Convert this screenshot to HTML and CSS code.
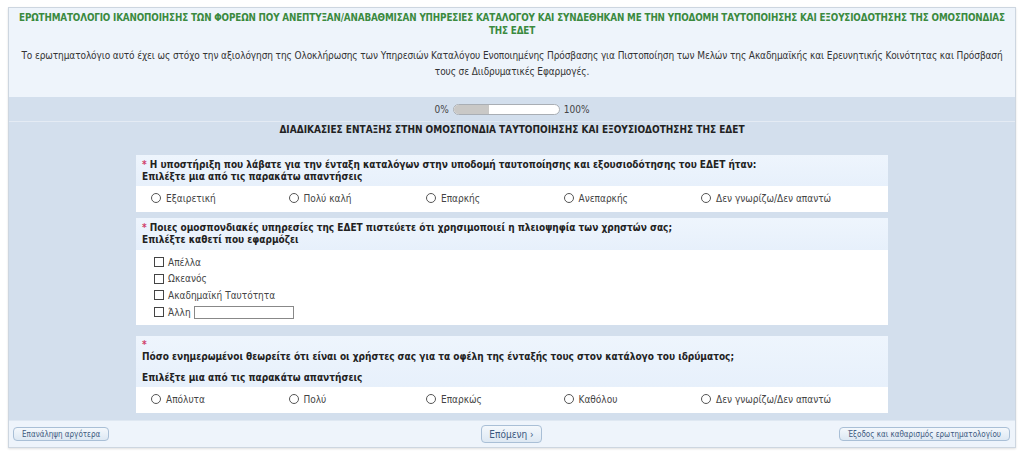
FILE: index.html
```html
<!DOCTYPE html>
<html>
<head>
<meta charset="utf-8">
<link rel="stylesheet" href="styles.css">
</head>
<body>
<div class="survey">
  <div class="intro">
    <h1 class="title">ΕΡΩΤΗΜΑΤΟΛΟΓΙΟ ΙΚΑΝΟΠΟΙΗΣΗΣ ΤΩΝ ΦΟΡΕΩΝ ΠΟΥ ΑΝΕΠΤΥΞΑΝ/ΑΝΑΒΑΘΜΙΣΑΝ ΥΠΗΡΕΣΙΕΣ ΚΑΤΑΛΟΓΟΥ ΚΑΙ ΣΥΝΔΕΘΗΚΑΝ ΜΕ ΤΗΝ ΥΠΟΔΟΜΗ ΤΑΥΤΟΠΟΙΗΣΗΣ ΚΑΙ ΕΞΟΥΣΙΟΔΟΤΗΣΗΣ ΤΗΣ ΟΜΟΣΠΟΝΔΙΑΣ ΤΗΣ ΕΔΕΤ</h1>
    <p class="desc">Το ερωτηματολόγιο αυτό έχει ως στόχο την αξιολόγηση της Ολοκλήρωσης των Υπηρεσιών Καταλόγου Ενοποιημένης Πρόσβασης για Πιστοποίηση των Μελών της Ακαδημαϊκής και Ερευνητικής Κοινότητας και Πρόσβασή τους σε Διιδρυματικές Εφαρμογές.</p>
  </div>

  <div class="progress-row">
    <span>0%</span>
    <span class="bar"><span class="fill"></span></span>
    <span>100%</span>
  </div>

  <div class="group">
    <h2 class="group-title">ΔΙΑΔΙΚΑΣΙΕΣ ΕΝΤΑΞΗΣ ΣΤΗΝ ΟΜΟΣΠΟΝΔΙΑ ΤΑΥΤΟΠΟΙΗΣΗΣ ΚΑΙ ΕΞΟΥΣΙΟΔΟΤΗΣΗΣ ΤΗΣ ΕΔΕΤ</h2>

    <div class="question">
      <div class="q-head">
        <div><span class="req">*</span> Η υποστήριξη που λάβατε για την ένταξη καταλόγων στην υποδομή ταυτοποίησης και εξουσιοδότησης του ΕΔΕΤ ήταν:</div>
        <div>Επιλέξτε μια από τις παρακάτω απαντήσεις</div>
      </div>
      <div class="answers choices">
        <label><span class="radio"></span>Εξαιρετική</label>
        <label><span class="radio"></span>Πολύ καλή</label>
        <label><span class="radio"></span>Επαρκής</label>
        <label><span class="radio"></span>Ανεπαρκής</label>
        <label><span class="radio"></span>Δεν γνωρίζω/Δεν απαντώ</label>
      </div>
    </div>

    <div class="question q-multi">
      <div class="q-head">
        <div><span class="req">*</span> Ποιες ομοσπονδιακές υπηρεσίες της ΕΔΕΤ πιστεύετε ότι χρησιμοποιεί η πλειοψηφία των χρηστών σας;</div>
        <div>Επιλέξτε καθετί που εφαρμόζει</div>
      </div>
      <div class="answers checks">
        <label><span class="check"></span>Απέλλα</label>
        <label><span class="check"></span>Ωκεανός</label>
        <label><span class="check"></span>Ακαδημαϊκή Ταυτότητα</label>
        <label><span class="check"></span>Άλλη <span class="other"></span></label>
      </div>
    </div>

    <div class="question q-wide">
      <div class="q-head">
        <div class="req">*</div>
        <div>Πόσο ενημερωμένοι θεωρείτε ότι είναι οι χρήστες σας για τα οφέλη της ένταξής τους στον κατάλογο του ιδρύματος;</div>
        <div class="hint">Επιλέξτε μια από τις παρακάτω απαντήσεις</div>
      </div>
      <div class="answers choices">
        <label><span class="radio"></span>Απόλυτα</label>
        <label><span class="radio"></span>Πολύ</label>
        <label><span class="radio"></span>Επαρκώς</label>
        <label><span class="radio"></span>Καθόλου</label>
        <label><span class="radio"></span>Δεν γνωρίζω/Δεν απαντώ</label>
      </div>
    </div>
  </div>

  <div class="nav-row">
    <div class="nav-left"><button class="btn small">Επανάληψη αργότερα</button></div>
    <button class="btn next">Επόμενη ›</button>
    <div class="nav-right"><button class="btn small">Έξοδος και καθαρισμός ερωτηματολογίου</button></div>
  </div>
</div>
</body>
</html>
```

FILE: styles.css
```css
body {
  margin: 0;
  padding: 7px 8px;
  background: #ffffff;
  font-family: "DejaVu Sans Condensed", "DejaVu Sans", Verdana, sans-serif;
  font-size: 10px;
  color: #333;
}

.survey {
  border: 1px solid #cdd6e0;
  box-shadow: 0 1px 2px rgba(0, 0, 0, 0.12);
}

.intro {
  background: #eef4fb;
  padding: 3px 2px 0;
  height: 86px;
  text-align: center;
}

.title {
  margin: 0 0 11px;
  font-size: 9.8px;
  line-height: 13px;
  font-weight: bold;
  letter-spacing: -0.15px;
  color: #3b8a3f;
}

.desc {
  margin: 0;
  font-size: 10px;
  line-height: 16px;
  letter-spacing: -0.1px;
  color: #333;
}

.progress-row {
  background: #d3dfed;
  height: 24px;
  display: flex;
  align-items: center;
  justify-content: center;
  gap: 4px;
  color: #444;
}

.bar {
  width: 105px;
  height: 9px;
  border: 1px solid #a9aeb4;
  border-radius: 6px;
  background: #fff;
  overflow: hidden;
  display: flex;
}

.fill {
  width: 35px;
  background: #c9c8c6;
}

.group {
  background: #d3dfed;
  border-top: 1px solid #e4ebf4;
  padding: 1px 0 7px;
}

.group-title {
  margin: 0 0 19px;
  font-size: 10px;
  line-height: 13px;
  font-weight: bold;
  text-align: center;
  color: #222;
}

.question {
  margin: 0 127px 6px 127px;
}

.question:last-child {
  margin-bottom: 0;
}

.q-multi {
  margin-bottom: 11px;
}

.q-head {
  background: linear-gradient(to bottom, #eef5fd, #e7f0fb);
  padding: 4px 8px 3px 6px;
  font-weight: bold;
  line-height: 12px;
  color: #222;
}

.q-multi .q-head {
  padding-bottom: 4px;
}

.q-wide .q-head {
  padding-top: 3px;
}

.q-wide .q-head .hint {
  margin-top: 9px;
}

.req {
  color: #d0406a;
}

.answers {
  background: #fff;
  color: #444;
}

.choices {
  display: grid;
  grid-template-columns: repeat(5, 137.5px);
  padding: 5px 0 7px 15px;
}

.choices label {
  display: flex;
  align-items: center;
  height: 14px;
  white-space: nowrap;
}

.checks {
  display: flex;
  flex-direction: column;
  padding: 5px 0 6px 18px;
  gap: 2.7px;
}

.checks label {
  display: flex;
  align-items: center;
  height: 14px;
}

.radio {
  width: 8px;
  height: 8px;
  border: 1px solid #555;
  border-radius: 50%;
  margin-right: 5px;
}

.check {
  width: 8px;
  height: 8px;
  border: 1px solid #444;
  margin-right: 4px;
}

.other {
  display: inline-block;
  width: 98px;
  height: 11px;
  border: 1px solid #888;
  margin-left: 3px;
  background: #fff;
}

.nav-row {
  background: #eef4fb;
  border-top: 1px solid #dfe8f2;
  display: grid;
  grid-template-columns: 1fr auto 1fr;
  align-items: center;
  padding: 0 5px 0 4px;
  height: 26px;
}

.nav-right {
  text-align: right;
}

.btn {
  font-family: "DejaVu Sans Condensed", "DejaVu Sans", Verdana, sans-serif;
  color: #3d5a80;
  background: linear-gradient(to bottom, #f4f8fc, #dde8f3);
  border: 1px solid #a9bfd6;
  border-radius: 4px;
  padding: 0 8px;
  cursor: pointer;
}

.btn.small {
  font-size: 8px;
  height: 14px;
}

.btn.next {
  font-size: 10px;
  height: 18px;
  padding: 0 7px;
}
```
